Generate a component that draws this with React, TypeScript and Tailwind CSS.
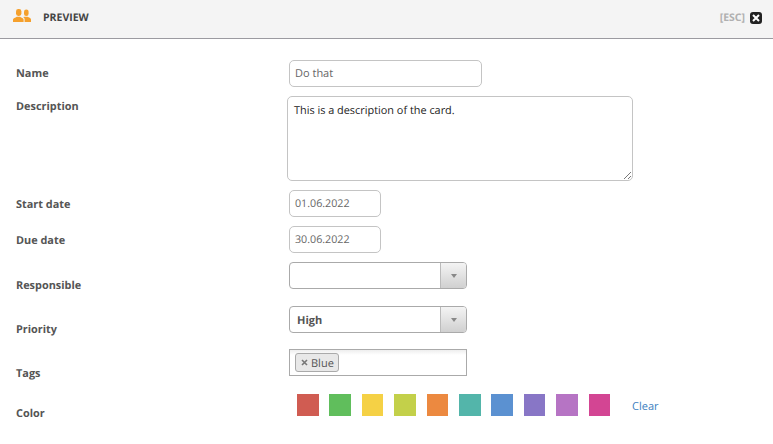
import React from "react";

const font = { fontFamily: '"Open Sans", "Noto Sans", sans-serif', textRendering: "geometricPrecision" as const };

function Label({ children, className = "" }: { children: React.ReactNode; className?: string }) {
  return <div className={`w-[273px] shrink-0 text-[10.9px] font-bold leading-[14px] text-[#555] ${className}`}>{children}</div>;
}

function Select({ value, className = "" }: { value?: string; className?: string }) {
  return (
    <div className={`flex h-[27px] w-[178px] overflow-hidden rounded-[4px] border border-[#aaa] bg-white ${className}`}>
      <div className="flex-1 pl-[7px] text-[11px] font-bold leading-[27px] text-[#555]">{value}</div>
      <div className="flex w-[26px] items-center justify-center border-l border-[#bbb] bg-gradient-to-b from-[#f4f4f4] to-[#d0d0d0]">
        <div className="h-0 w-0 border-x-[3.5px] border-t-[4px] border-x-transparent border-t-[#888]" />
      </div>
    </div>
  );
}

const colors = [
  ["#d05c52", 22, 10],
  ["#60be5c", 22, 11],
  ["#f5d145", 21, 11],
  ["#c3d04a", 22, 11],
  ["#ec8940", 21, 11],
  ["#53b5aa", 22, 10],
  ["#5b91d1", 22, 11],
  ["#8876c6", 21, 11],
  ["#b674c4", 22, 11],
  ["#d34593", 21, 0],
] as const;

export default function App() {
  return (
    <div className="h-[444px] w-[773px] overflow-hidden bg-white" style={font}>
      <div className="flex h-[39px] items-center border-b border-[#9b9aa0] bg-[#f4f4f4] pl-[13px] pr-[11px]">
        <svg width="18" height="14" viewBox="0 0 18 14" className="mb-[6px]" fill="#f5a02c">
          <rect x="3" y="0" width="5.4" height="7" rx="2.4" />
          <rect x="11" y="0.6" width="4.6" height="6.4" rx="2.2" />
          <path d="M0 13v-2.4c0-1.4 2.4-1.7 3.8-2.8h3.2c1.4 1.1 3.6 1.4 3.6 2.8V13z" />
          <path d="M11.6 13v-2.6c0-1-.6-1.7-1.5-2.3l1.6-.3h2.8c1.2.9 3.5 1.1 3.5 2.6V13z" />
        </svg>
        <div className="ml-[12px] text-[10.5px] font-bold text-[#444]">PREVIEW</div>
        <div className="ml-auto text-[10.5px] font-bold text-[#b0b0b0]">[ESC]</div>
        <div className="ml-[5px] mb-[3px] flex h-[12px] w-[12px] items-center justify-center rounded-[3px] bg-[#222]">
          <svg width="8" height="8" viewBox="0 0 8 8" stroke="#fff" strokeWidth="2">
            <path d="M1 1l6 6M7 1L1 7" />
          </svg>
        </div>
      </div>

      <div className="flex flex-col pl-[16px] pt-[21px]">
        <div className="flex items-center">
          <Label>Name</Label>
          <div className="h-[27px] w-[193px] rounded-[5px] border border-[#c4c4c4] pl-[5px] text-[11px] leading-[25px] text-[#666]">Do that</div>
        </div>

        <div className="mt-[9px] flex">
          <Label className="mt-[4px]">Description</Label>
          <div className="relative -ml-[2px] h-[85px] w-[346px] rounded-[5px] border border-[#c4c4c4] px-[6px] pt-[6px] text-[10.9px] leading-[16px] text-[#222]">
            This is a description of the card.
            <svg width="10" height="10" viewBox="0 0 10 10" stroke="#555" strokeWidth="0.8" className="absolute bottom-0 right-0">
              <path d="M2 9l7-7M6 9l3-3" />
            </svg>
          </div>
        </div>

        <div className="mt-[9px] flex items-center">
          <Label className="pt-[2px]">Start date</Label>
          <div className="h-[27px] w-[92px] rounded-[5px] border border-[#c4c4c4] pl-[5px] text-[10.7px] leading-[27px] text-[#666]">01.06.2022</div>
        </div>

        <div className="mt-[9px] flex items-center">
          <Label className="pt-[2px]">Due date</Label>
          <div className="h-[27px] w-[92px] rounded-[5px] border border-[#c4c4c4] pl-[5px] text-[10.7px] leading-[27px] text-[#666]">30.06.2022</div>
        </div>

        <div className="mt-[9px] flex items-start">
          <Label className="mt-[17px]">Responsible</Label>
          <Select />
        </div>

        <div className="mt-[13px] flex items-start">
          <Label className="mt-[17px]">Priority</Label>
          <Select value="High" />
        </div>

        <div className="mt-[12px] flex items-start">
          <Label className="mt-[18px]">Tags</Label>
          <div className="h-[27px] w-[178px] border border-[#aaa] bg-gradient-to-b from-[#eee] to-white to-[20%] pl-[5px] pt-[3px]">
            <div className="flex h-[19px] w-[44px] items-center rounded-[3px] border border-[#aaa] bg-[#e8e8e8] pl-[5px] pt-[2px] text-[11px] leading-[15px] text-[#555]">
              <svg width="7" height="7" viewBox="0 0 7 7" stroke="#777" strokeWidth="1.6" className="mr-[3px] -mt-[2px] shrink-0">
                <path d="M1 1l5 5M6 1L1 6" />
              </svg>
              Blue
            </div>
          </div>
        </div>

        <div className="mt-[13px] flex items-start">
          <Label className="mt-[13px]">Color</Label>
          <div className="ml-[8px] flex items-start">
            {colors.map(([c, w, m]) => (
              <div key={c} className="h-[22px]" style={{ backgroundColor: c, width: w, marginRight: m }} />
            ))}
            <div className="ml-[22px] mt-[5px] text-[11px] leading-[16px] text-[#3d7fc0]">Clear</div>
          </div>
        </div>
      </div>
    </div>
  );
}
